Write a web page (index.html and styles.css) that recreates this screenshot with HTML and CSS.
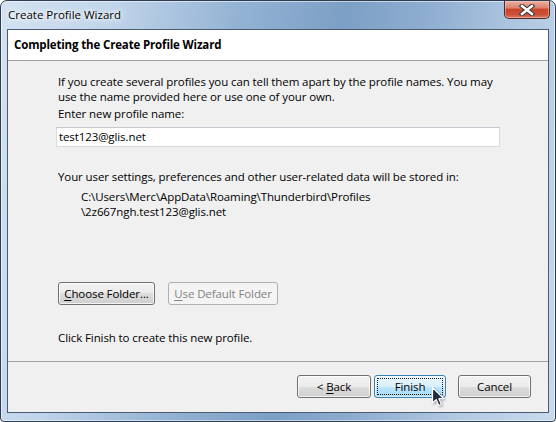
FILE: index.html
```html
<!DOCTYPE html>
<html>
<head>
<meta charset="utf-8">
<link rel="stylesheet" href="styles.css">
</head>
<body>
<div class="window">
  <div class="titlebar">
    <span class="title">Create Profile Wizard</span>
    <div class="close">
      <svg width="16" height="12" viewBox="0 0 16 12">
        <path d="M3 2 L13 10 M13 2 L3 10" stroke="#3b3b3b" stroke-width="4.6" stroke-linecap="square" fill="none"/>
        <path d="M3 2 L13 10 M13 2 L3 10" stroke="#ffffff" stroke-width="2.4" stroke-linecap="square" fill="none"/>
      </svg>
    </div>
  </div>
  <div class="client">
    <div class="header">Completing the Create Profile Wizard</div>
    <div class="content">
      <p class="intro">If you create several profiles you can tell them apart by the profile names. You may<br>use the name provided here or use one of your own.</p>
      <p class="label">Enter new profile name:</p>
      <div class="input">test123@glis.net</div>
      <p class="info">Your user settings, preferences and other user-related data will be stored in:</p>
      <p class="path">C:\Users\Merc\AppData\Roaming\Thunderbird\Profiles<br>\2z667ngh.test123@glis.net</p>
      <div class="folder-btns">
        <button class="btn btn-choose"><u>C</u>hoose Folder...</button>
        <button class="btn btn-disabled" disabled><u>U</u>se Default Folder</button>
      </div>
      <p class="note">Click Finish to create this new profile.</p>
    </div>
    <div class="footer">
      <button class="btn btn-back">&lt; <u>B</u>ack</button>
      <button class="btn btn-finish">Finish</button>
      <button class="btn btn-cancel">Cancel</button>
    </div>
  </div>
  <svg class="cursor" width="14" height="22" viewBox="0 0 14 22">
    <path d="M1.5 1.5 L1.5 17 L5.2 13.6 L7.8 19.6 L10.4 18.5 L7.9 12.7 L12.8 12.7 Z" fill="#1e2c40" stroke="#ffffff" stroke-width="1.2" stroke-linejoin="round"/>
  </svg>
</div>
</body>
</html>
```
FILE: styles.css
```css
html, body {
  margin: 0;
  padding: 0;
  background: #ffffff;
}

body {
  font-family: "Open Sans", "Noto Sans", sans-serif;
  font-size: 11.5px;
  color: #000000;
}

.window {
  position: relative;
  width: 556px;
  height: 422px;
  box-sizing: border-box;
  border: 1px solid #2d3c50;
  border-radius: 7px 7px 4px 4px;
  background: linear-gradient(100deg, #d3e2f1 0%, #c0d4ea 18%, #94b3d4 38%, #7c9fc5 55%, #8eadd0 68%, #b3cae3 85%, #c9daed 100%);
  box-shadow: inset 0 0 0 1px rgba(255, 255, 255, 0.55);
  display: flex;
  flex-direction: column;
  overflow: hidden;
}

.titlebar {
  height: 28px;
  flex: none;
  display: flex;
  justify-content: space-between;
  align-items: flex-start;
}

.title {
  padding-left: 7px;
  line-height: 28px;
  font-size: 11.5px;
  color: #000;
  text-shadow: 0 0 6px #ffffff, 0 0 10px rgba(255, 255, 255, 0.9), 0 0 3px rgba(255, 255, 255, 0.9);
}

.close {
  width: 46px;
  height: 18px;
  box-sizing: border-box;
  margin-right: 5px;
  border: 1px solid #4a2a26;
  border-top: none;
  border-radius: 0 0 5px 5px;
  background: linear-gradient(#eab0a2 0%, #dc8370 40%, #c6452c 50%, #cc5138 80%, #dc7a62 100%);
  box-shadow: inset 0 0 0 1px rgba(255, 220, 210, 0.45);
  display: flex;
  align-items: center;
  justify-content: center;
}

.close svg {
  display: block;
}

.client {
  flex: 1;
  margin: 0 6px 8px 6px;
  border: 1px solid #4b5c72;
  background: #f0f0f0;
  display: flex;
  flex-direction: column;
}

.header {
  height: 31px;
  flex: none;
  box-sizing: border-box;
  background: #ffffff;
  border-bottom: 1px solid #a0a0a0;
  padding: 0 0 2px 6px;
  display: flex;
  align-items: center;
  font-weight: bold;
  font-size: 11.5px;
  letter-spacing: -0.15px;
}

.content {
  flex: none;
  border-bottom: 1px solid #a0a0a0;
  padding: 13px 48px 0 50px;
  height: 287px;
  letter-spacing: -0.1px;
}

.content p {
  margin: 0;
  line-height: 15px;
  white-space: nowrap;
}

.content .label {
  margin-top: 2px;
}

.input {
  margin: 6px 0 0 -2px;
  width: 444px;
  height: 20px;
  box-sizing: border-box;
  border: 1px solid #d6dae1;
  border-top-color: #c4c8cf;
  background: #ffffff;
  padding-left: 2px;
  line-height: 18px;
}

.content .info {
  margin-top: 22px;
}

.content .path {
  margin-top: 5px;
  padding-left: 23px;
}

.folder-btns {
  margin-top: 63px;
  display: flex;
  gap: 13px;
}

.content .note {
  margin-top: 25px;
}

.btn {
  position: relative;
  height: 23px;
  box-sizing: border-box;
  border: 1px solid #707070;
  border-radius: 3px;
  background: linear-gradient(#f2f2f2 0%, #ebebeb 50%, #dddddd 50%, #cfcfcf 100%);
  box-shadow: inset 0 0 0 1px rgba(255, 255, 255, 0.75);
  font-family: inherit;
  font-size: 11.5px;
  letter-spacing: -0.1px;
  color: #000;
  padding: 0;
  margin: 0;
}

.btn u {
  text-decoration: underline;
  text-underline-offset: 2px;
}

.btn-choose {
  width: 97px;
}

.btn-disabled {
  width: 110px;
  border-color: #adb2b5;
  background: #f4f4f4;
  box-shadow: none;
  color: #838383;
}

.footer {
  flex: 1;
  display: flex;
  justify-content: flex-end;
  align-items: flex-start;
  padding: 13px 17px 0 0;
}

.btn-back {
  width: 74px;
}

.btn-finish {
  width: 72px;
  margin-left: 3px;
  border-color: #3c7fb1;
  background: linear-gradient(#eaf6fd 0%, #d9f0fc 50%, #bee6fd 50%, #a7d9f5 100%);
  box-shadow: inset 0 0 0 1px rgba(255, 255, 255, 0.6);
}

.btn-finish::after {
  content: "";
  position: absolute;
  left: 2px;
  top: 2px;
  right: 2px;
  bottom: 2px;
  border: 1px dotted #1a1a1a;
}

.btn-cancel {
  width: 73px;
  margin-left: 12px;
}

.cursor {
  position: absolute;
  left: 430px;
  top: 385px;
  filter: drop-shadow(1px 1px 1px rgba(0, 0, 0, 0.35));
}
```
